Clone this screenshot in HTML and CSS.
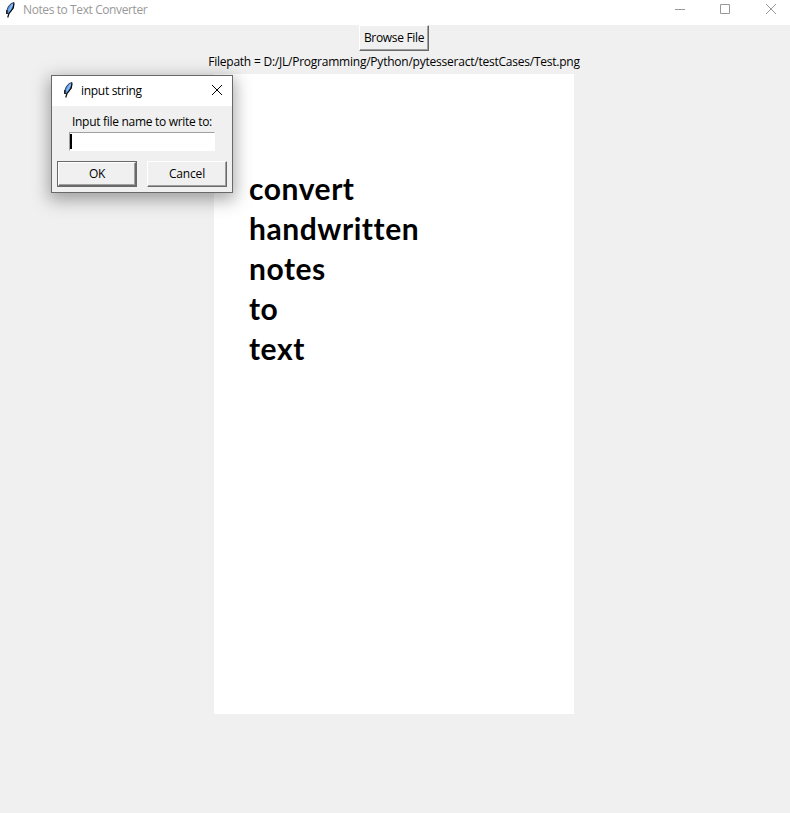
FILE: index.html
```
<!DOCTYPE html>
<html lang="en">
<head>
<meta charset="utf-8">
<title>Notes to Text Converter</title>
<link rel="stylesheet" href="styles.css">
</head>
<body>
<svg width="0" height="0" class="defs">
  <symbol id="feather" viewBox="0 0 12 18">
    <path d="M10 1.500C7 2 4.200 4.500 3.200 8.500L2.800 12.500L4.500 12.700C7.800 10.500 9.600 6.500 10 1.500Z" fill="#5b9be6" stroke="#222a33" stroke-width="0.900"/>
    <path d="M8.700 3L5 10" stroke="#8fc0fa" stroke-width="1.200" fill="none"/>
    <path d="M10 2.500L9.300 7L5 12.500L3.700 16.500M2.800 9V13" stroke="#0a0a0a" stroke-width="1.200" fill="none"/>
  </symbol>
</svg>
<div class="window">
  <header class="titlebar">
    <svg class="feather"><use href="#feather"/></svg>
    <span class="title">Notes to Text Converter</span>
    <div class="controls">
      <svg width="12" height="12" viewBox="0 0 12 12"><path d="M1 6.500H11" /></svg>
      <svg width="12" height="12" viewBox="0 0 12 12"><path d="M1.500 1.500H10.500V10.500H1.500Z"/></svg>
      <svg width="12" height="12" viewBox="0 0 12 12"><path d="M1 1L11 11M11 1L1 11"/></svg>
    </div>
  </header>
  <main class="content">
    <button class="button browse">Browse File</button>
    <div class="filepath">Filepath = D:/JL/Programming/Python/pytesseract/testCases/Test.png</div>
    <div class="page">
      <div>convert</div>
      <div>handwritten</div>
      <div>notes</div>
      <div>to</div>
      <div>text</div>
    </div>
  </main>
</div>
<div class="dialog">
  <div class="dialog-title">
    <svg class="feather"><use href="#feather"/></svg>
    <span>input string</span>
    <svg class="close" width="12" height="12" viewBox="0 0 12 12"><path d="M1 1L11 11M11 1L1 11"/></svg>
  </div>
  <div class="dialog-body">
    <div class="prompt">Input file name to write to:</div>
    <div class="entry"><i class="caret"></i></div>
    <div class="actions">
      <div class="default"><button class="button">OK</button></div>
      <button class="button cancel">Cancel</button>
    </div>
  </div>
</div>
</body>
</html>
```
FILE: styles.css
```
* { box-sizing: border-box; }
body {
  margin: 0;
  background: #f0f0f0;
  color: #000;
  font: 12px/16px "Open Sans", "Noto Sans", sans-serif;
  letter-spacing: -0.23px;
  white-space: nowrap;
  overflow: hidden;
}
.defs { position: absolute; }
.window { width: 790px; height: 813px; }
.titlebar {
  display: flex;
  height: 25px;
  padding: 2px 13px 0 4px;
  background: #fff;
  color: #999;
}
.feather { display: block; width: 12px; height: 18px; }
.titlebar .feather { margin-top: -1px; }
.title { margin-left: 7px; letter-spacing: -0.4px; }
.controls { display: flex; gap: 34px; margin: 1px 0 0 auto; }
.controls svg { display: block; stroke: #999; fill: none; }
.controls svg:first-child { margin-right: -1px; }
.content { display: flex; flex-direction: column; align-items: center; }
.button {
  display: block;
  height: 26px;
  padding: 0;
  border: 1px solid;
  border-color: #fff #696969 #696969 #fff;
  box-shadow: inset -1px -1px #a0a0a0;
  background: #f0f0f0;
  color: #000;
  font: inherit;
  letter-spacing: inherit;
  text-align: center;
}
.browse { width: 70px; margin-right: 2px; letter-spacing: -0.32px; }
.filepath { height: 23px; padding-top: 3px; margin-right: 2px; }
.page {
  width: 360px;
  height: 640px;
  margin-right: 2px;
  padding: 94px 0 0 35px;
  background: #fff;
  font: bold 30px/40px Lato, sans-serif;
  font-variant-ligatures: none;
  letter-spacing: 0.55px;
}
.dialog {
  position: absolute;
  left: 51px;
  top: 75px;
  width: 182px;
  height: 118px;
  border: 1px solid #696969;
  background: #f0f0f0;
  box-shadow: 0 5px 16px 2px rgba(0, 0, 0, 0.34);
}
.dialog-title {
  display: flex;
  height: 30px;
  padding: 6px 9px 0 10px;
  background: #fff;
}
.dialog-title .feather { margin-top: -1px; }
.dialog-title span { margin: 1px 0 0 7px; letter-spacing: -0.3px; }
.close { margin: 2px 0 0 auto; stroke: #000; fill: none; }
.prompt { height: 26px; padding: 8px 0 0 20px; letter-spacing: -0.3px; }
.entry {
  display: flex;
  width: 146px;
  height: 19px;
  margin-left: 17px;
  padding-top: 1px;
  border: 1px solid;
  border-color: #a0a0a0 #fff #fff #a0a0a0;
  background: #fff;
}
.caret { width: 2px; height: 15px; background: #000; }
.actions { display: flex; gap: 10px; margin: 10px 0 0 5px; }
.default { border: 1px solid #696969; }
.default .button { width: 78px; height: 24px; }
.cancel { width: 80px; letter-spacing: -0.15px; }
```
